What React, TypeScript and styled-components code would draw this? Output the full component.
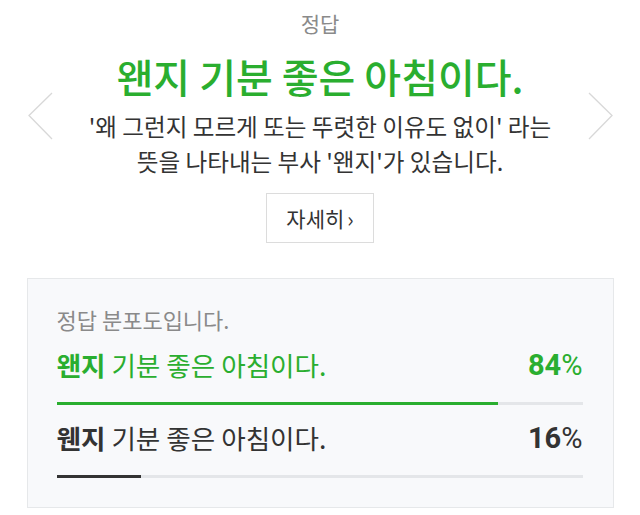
import React from "react";
import styled, { createGlobalStyle } from "styled-components";

const Global = createGlobalStyle`
  html, body { margin: 0; padding: 0; background: #fff; }
  body { font-family: "Noto Sans CJK KR", "Noto Sans", sans-serif; width: 640px; height: 515px; overflow: hidden; }
`;

const Page = styled.div`
  width: 640px;
  display: flex;
  flex-direction: column;
  align-items: center;
`;

const Answer = styled.section`
  position: relative;
  width: 640px;
  display: flex;
  flex-direction: column;
  align-items: center;
  padding-top: 10px;
`;

const Label = styled.div`
  font-size: 21px;
  line-height: 26px;
  color: #8a8a8a;
`;

const Title = styled.h1`
  margin: 17px 0 0;
  font-size: 40px;
  line-height: 46px;
  font-weight: 500;
  color: #2aae2f;
  letter-spacing: 0;
`;

const Desc = styled.p`
  margin: 10px 0 0;
  font-size: 23.6px;
  line-height: 35px;
  color: #333;
  text-align: center;
`;

const MoreButton = styled.button`
  margin-top: 14px;
  width: 108px;
  height: 50px;
  border: 1px solid #dcdcdc;
  background: #fff;
  font-family: inherit;
  font-size: 21px;
  color: #333;
  display: flex;
  align-items: center;
  justify-content: center;
  gap: 3px;
  padding: 0;
`;

const Nav = styled.div<{ $side: "left" | "right" }>`
  position: absolute;
  top: 92px;
  ${(p) => (p.$side === "left" ? "left: 28px;" : "right: 27px;")}
  width: 25px;
  height: 48px;
`;

const Chevron = ({ dir }: { dir: "left" | "right" }) => (
  <svg width="25" height="48" viewBox="0 0 25 48">
    <polyline
      points={dir === "left" ? "24,1 1,23.5 24,47" : "1,1 24,23.5 1,47"}
      fill="none"
      stroke="#d8d8d8"
      strokeWidth="1.3"
    />
  </svg>
);

const Panel = styled.section`
  margin-top: 35px;
  width: 587px;
  box-sizing: border-box;
  border: 1px solid #e6e8ea;
  background: #f8f9fb;
  padding: 27px 30px 29px 29px;
`;

const PanelTitle = styled.div`
  font-size: 22px;
  line-height: 26px;
  color: #8a8a8a;
`;

const Row = styled.div`
  margin-top: 16px;
  &:first-of-type {
    margin-top: 17px;
  }
`;

const RowHead = styled.div<{ $color: string }>`
  display: flex;
  justify-content: space-between;
  align-items: center;
  color: ${(p) => p.$color};
  font-size: 26.6px;
  line-height: 34px;
`;

const Strong = styled.b`
  font-weight: 700;
`;

const Percent = styled.span`
  font-family: "Roboto", "Noto Sans", sans-serif;
  font-size: 29px;
  font-weight: 700;
  span {
    font-weight: 400;
  }
`;

const Track = styled.div`
  margin-top: 20px;
  height: 3px;
  background: #e4e6e9;
`;

const Fill = styled.div<{ $color: string }>`
  height: 100%;
  background: ${(p) => p.$color};
`;

const rows = [
  { first: "왠지", rest: " 기분 좋은 아침이다.", pct: 84, color: "#2aae2f" },
  { first: "웬지", rest: " 기분 좋은 아침이다.", pct: 16, color: "#333333" },
];

export default function App() {
  return (
    <>
      <Global />
      <Page>
        <Answer>
          <Nav $side="left"><Chevron dir="left" /></Nav>
          <Nav $side="right"><Chevron dir="right" /></Nav>
          <Label>정답</Label>
          <Title>왠지 기분 좋은 아침이다.</Title>
          <Desc>
            '왜 그런지 모르게 또는 뚜렷한 이유도 없이' 라는
            <br />
            뜻을 나타내는 부사 '왠지'가 있습니다.
          </Desc>
          <MoreButton>
            자세히<span>›</span>
          </MoreButton>
        </Answer>
        <Panel>
          <PanelTitle>정답 분포도입니다.</PanelTitle>
          {rows.map((r) => (
            <Row key={r.first}>
              <RowHead $color={r.color}>
                <span>
                  <Strong>{r.first}</Strong>
                  {r.rest}
                </span>
                <Percent>
                  {r.pct}
                  <span>%</span>
                </Percent>
              </RowHead>
              <Track>
                <Fill $color={r.color} style={{ width: `${r.pct}%` }} />
              </Track>
            </Row>
          ))}
        </Panel>
      </Page>
    </>
  );
}
